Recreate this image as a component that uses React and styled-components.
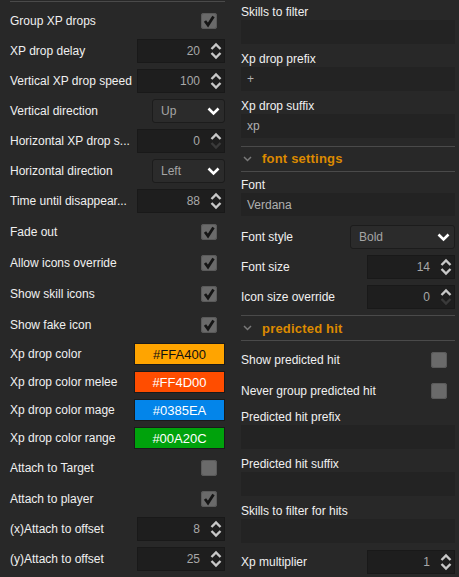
import styled, { createGlobalStyle } from "styled-components";

const GlobalStyle = createGlobalStyle`
  body {
    margin: 0;
    background: #282828;
    font-family: "Liberation Sans", Arial, sans-serif;
    font-size: 12px;
    color: #f0f0f0;
  }
`;

const Page = styled.div`
  display: flex;
  gap: 16px;
  width: 459px;
  height: 577px;
  padding: 0 4px 0 10px;
  box-sizing: border-box;
  overflow: hidden;
`;

const Column = styled.div`
  display: flex;
  flex-direction: column;
  width: ${(p) => p.$w}px;
  flex-shrink: 0;
`;

const Divider = styled.div`
  height: 1px;
  background: #4a4a4a;
  margin-top: ${(p) => p.$top || 0}px;
  margin-bottom: ${(p) => p.$bottom || 0}px;
`;

const Row = styled.div`
  display: flex;
  align-items: center;
  justify-content: space-between;
  height: ${(p) => p.$h}px;
  margin-top: ${(p) => p.$top || 0}px;
  flex-shrink: 0;
`;

const Label = styled.span`
  white-space: nowrap;
  color: #f0f0f0;
`;

const Box = styled.div`
  width: 16px;
  height: 16px;
  margin-right: 8px;
  border-radius: 3px;
  background: #6a6a6a;
  box-shadow: inset 0 0 0 1px #5a5a5a;
  display: flex;
  align-items: center;
  justify-content: center;
`;

const Spinner = styled.div`
  width: 88px;
  height: 24px;
  box-sizing: border-box;
  background: #1e1e1e;
  border: 1px solid #191919;
  display: flex;
  align-items: center;
  justify-content: flex-end;
  color: #a8a8a8;
`;

const SpinArrows = styled.svg`
  margin: 0 2px 0 10px;
`;

const Select = styled.div`
  width: ${(p) => p.$w}px;
  height: 24px;
  box-sizing: border-box;
  border: 1px solid #1c1c1c;
  border-radius: 3px;
  background: #2b2b2b;
  display: flex;
  align-items: center;
  justify-content: space-between;
  padding: 0 4px 0 8px;
  color: #a5a5a5;
`;

const Swatch = styled.div`
  width: 91px;
  height: 22px;
  box-sizing: border-box;
  border: 1px solid #1a1a1a;
  background: ${(p) => p.$bg};
  color: ${(p) => p.$fg};
  display: flex;
  align-items: center;
  justify-content: center;
  font-size: 13px;
`;

const FieldLabel = styled.div`
  height: 16px;
  line-height: 16px;
  margin-top: ${(p) => p.$top || 0}px;
`;

const Field = styled.div`
  height: 24px;
  background: #232323;
  display: flex;
  align-items: center;
  padding-left: 6px;
  color: #b0b0b0;
`;

const Header = styled.div`
  height: 24px;
  display: flex;
  align-items: center;
  gap: 10px;
  padding-left: 2px;
  color: #dc8a00;
  font-weight: bold;
  font-size: 13px;
  letter-spacing: 0.2px;
`;

const Check = ({ on }) => (
  <Box>
    {on && (
      <svg width="14" height="14" viewBox="0 0 14 14">
        <polyline
          points="3,7 6,11 11.5,2.5"
          fill="none"
          stroke="#151515"
          strokeWidth="2.8"
        />
      </svg>
    )}
  </Box>
);

const NumberBox = ({ value }) => (
  <Spinner>
    {value}
    <SpinArrows width="12" height="18" viewBox="0 0 12 18">
      <polyline points="1.5,7 6,2.5 10.5,7" fill="none" stroke="#c8c8c8" strokeWidth="2.4" />
      <polyline
        points="1.5,11 6,15.5 10.5,11"
        fill="none"
        stroke={value === "0" ? "#3a3a3a" : "#c8c8c8"}
        strokeWidth="2.4"
      />
    </SpinArrows>
  </Spinner>
);

const Dropdown = ({ value, w }) => (
  <Select $w={w}>
    {value}
    <svg width="13" height="9" viewBox="0 0 13 9">
      <polyline points="1.5,1.5 6.5,6.5 11.5,1.5" fill="none" stroke="#ffffff" strokeWidth="2.6" />
    </svg>
  </Select>
);

const Section = ({ title }) => (
  <Header>
    <svg width="9" height="6" viewBox="0 0 9 6">
      <polyline points="1,1 4.5,4.5 8,1" fill="none" stroke="#7a7a7a" strokeWidth="1.5" />
    </svg>
    {title}
  </Header>
);

const ROW_H = { check: 31, spin: 30, select: 30, color: 28 };

const leftRows = [
  { type: "check", label: "Group XP drops", on: true },
  { type: "spin", label: "XP drop delay", value: "20" },
  { type: "spin", label: "Vertical XP drop speed", value: "100" },
  { type: "select", label: "Vertical direction", value: "Up" },
  { type: "spin", label: "Horizontal XP drop s...", value: "0" },
  { type: "select", label: "Horizontal direction", value: "Left" },
  { type: "spin", label: "Time until disappear...", value: "88" },
  { type: "check", label: "Fade out", on: true },
  { type: "check", label: "Allow icons override", on: true },
  { type: "check", label: "Show skill icons", on: true },
  { type: "check", label: "Show fake icon", on: true },
  { type: "color", label: "Xp drop color", value: "#FFA400", fg: "#111111" },
  { type: "color", label: "Xp drop color melee", value: "#FF4D00", fg: "#ffffff" },
  { type: "color", label: "Xp drop color mage", value: "#0385EA", fg: "#ffffff" },
  { type: "color", label: "Xp drop color range", value: "#00A20C", fg: "#ffffff" },
  { type: "check", label: "Attach to Target", on: false },
  { type: "check", label: "Attach to player", on: true },
  { type: "spin", label: "(x)Attach to offset", value: "8" },
  { type: "spin", label: "(y)Attach to offset", value: "25" },
];

const Control = ({ row, selectW }) => {
  if (row.type === "check") return <Check on={row.on} />;
  if (row.type === "spin") return <NumberBox value={row.value} />;
  if (row.type === "select") return <Dropdown value={row.value} w={selectW} />;
  return (
    <Swatch $bg={row.value} $fg={row.fg}>
      {row.value}
    </Swatch>
  );
};

const ConfigRow = ({ row, selectW = 73, top }) => (
  <Row $h={ROW_H[row.type]} $top={top}>
    <Label>{row.label}</Label>
    <Control row={row} selectW={selectW} />
  </Row>
);

const TextSetting = ({ label, value, top = 7 }) => (
  <>
    <FieldLabel $top={top}>{label}</FieldLabel>
    <Field>{value}</Field>
  </>
);

export default function App() {
  return (
    <>
      <GlobalStyle />
      <Page>
        <Column $w={215}>
          <Divider $top={1} $bottom={3} />
          {leftRows.map((row) => (
            <ConfigRow key={row.label} row={row} />
          ))}
        </Column>

        <Column $w={214}>
          <TextSetting label="Skills to filter" top={4} />
          <TextSetting label="Xp drop prefix" value="+" />
          <TextSetting label="Xp drop suffix" value="xp" />
          <Divider $top={8} />
          <Section title="font settings" />
          <Divider $bottom={5} />
          <TextSetting label="Font" value="Verdana" top={0} />
          <ConfigRow row={{ type: "select", label: "Font style", value: "Bold" }} selectW={105} top={6} />
          <ConfigRow row={{ type: "spin", label: "Font size", value: "14" }} />
          <ConfigRow row={{ type: "spin", label: "Icon size override", value: "0" }} />
          <Divider $top={3} />
          <Section title="predicted hit" />
          <Divider $bottom={3} />
          <ConfigRow row={{ type: "check", label: "Show predicted hit", on: false }} />
          <ConfigRow row={{ type: "check", label: "Never group predicted hit", on: false }} />
          <TextSetting label="Predicted hit prefix" top={3} />
          <TextSetting label="Predicted hit suffix" />
          <TextSetting label="Skills to filter for hits" />
          <ConfigRow row={{ type: "spin", label: "Xp multiplier", value: "1" }} top={4} />
        </Column>
      </Page>
    </>
  );
}
